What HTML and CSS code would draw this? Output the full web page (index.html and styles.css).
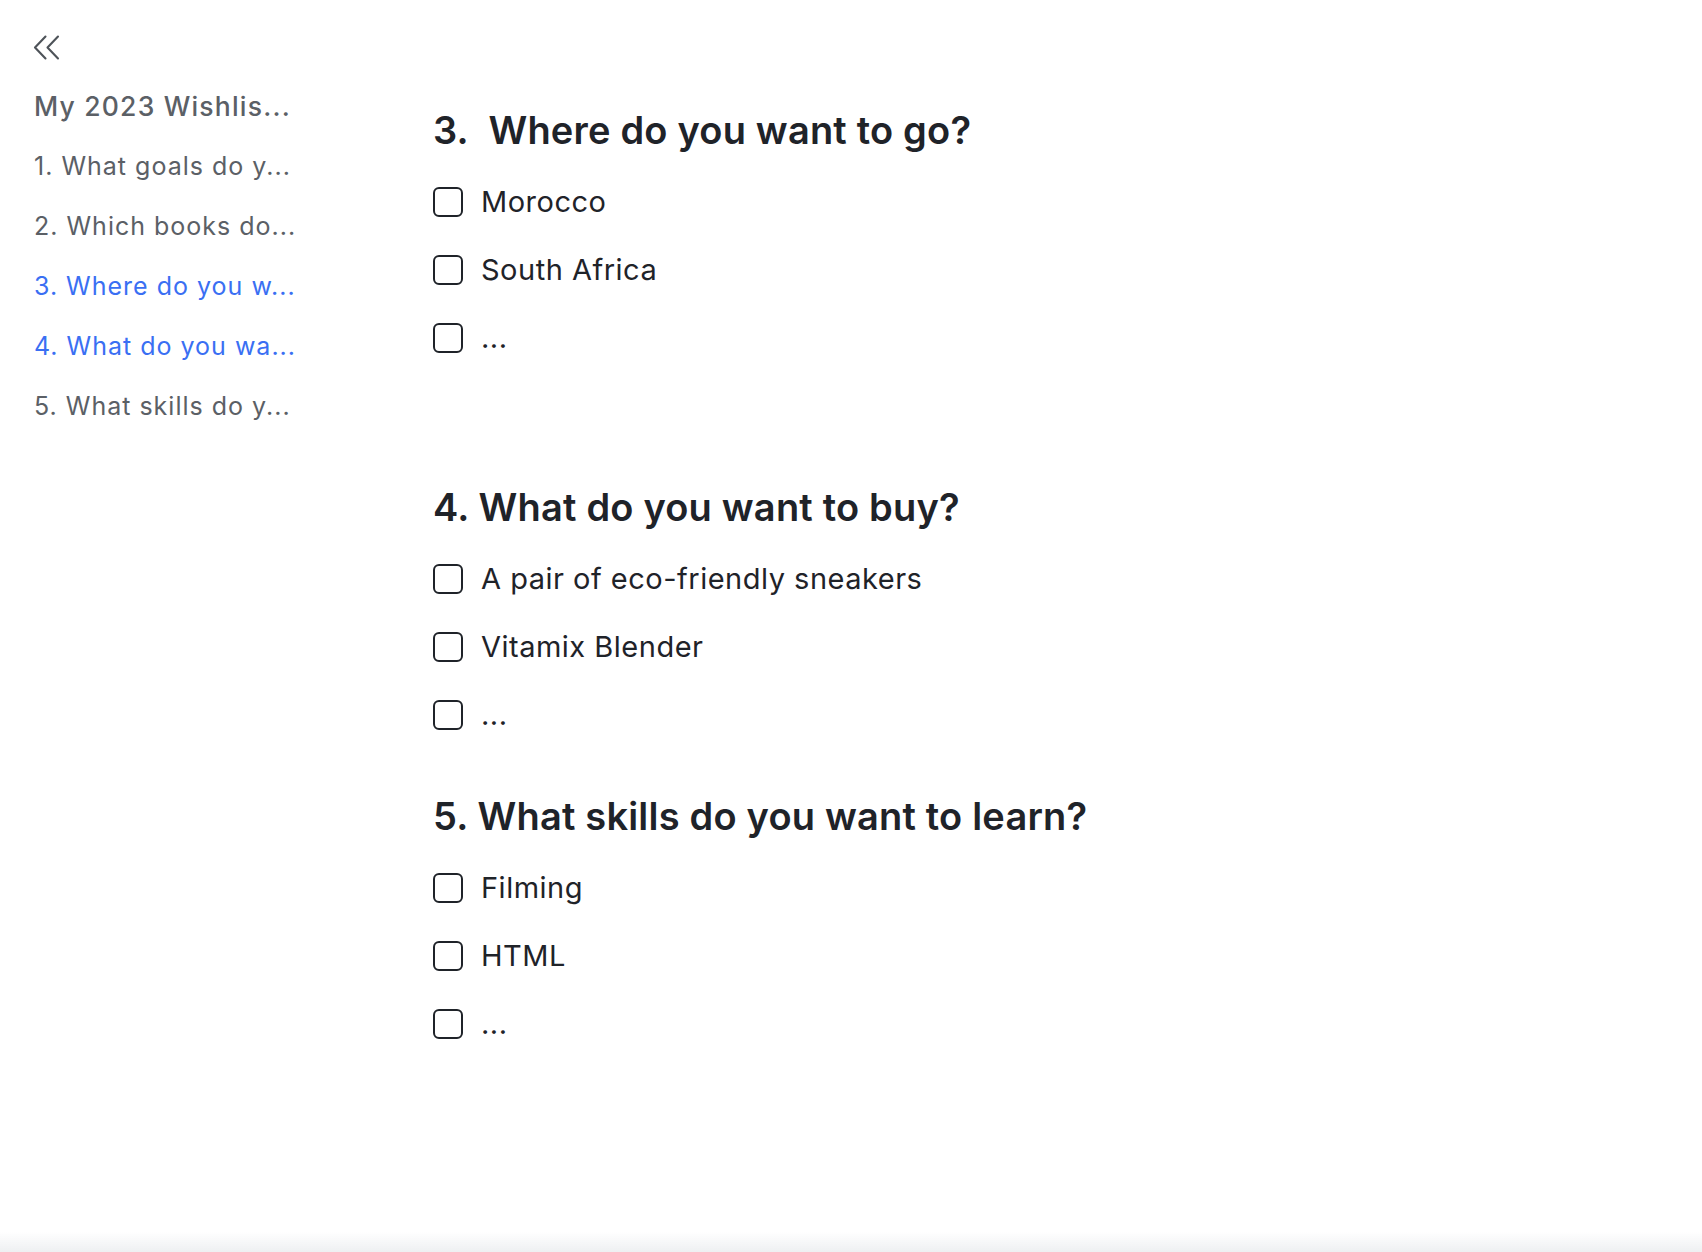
FILE: index.html
```html
<!DOCTYPE html>
<html lang="en">
<head>
<meta charset="utf-8">
<title>My 2023 Wishlist</title>
<link rel="stylesheet" href="styles.css">
</head>
<body>
<div class="page">
  <aside class="sidebar">
    <button class="collapse" aria-label="Collapse">
      <svg width="27" height="25" viewBox="0 0 27 25" fill="none" stroke="#4e5359" stroke-width="2.1" stroke-linecap="round" stroke-linejoin="round">
        <path d="M12.5 1.5 L2 12.5 L12.5 23.5"/>
        <path d="M25 1.5 L14.5 12.5 L25 23.5"/>
      </svg>
    </button>
    <nav class="toc">
      <div class="toc-title">My 2023 Wishlis...</div>
      <div class="toc-item">1. What goals do y...</div>
      <div class="toc-item">2. Which books do...</div>
      <div class="toc-item active">3. Where do you w...</div>
      <div class="toc-item active">4. What do you wa...</div>
      <div class="toc-item">5. What skills do y...</div>
    </nav>
  </aside>
  <main class="doc">
    <section class="block">
      <h2 class="heading">3.&nbsp; Where do you want to go?</h2>
      <ul class="todo">
        <li><span class="box"></span><span>Morocco</span></li>
        <li><span class="box"></span><span>South Africa</span></li>
        <li><span class="box"></span><span>...</span></li>
      </ul>
      <div class="empty-line"></div>
    </section>
    <section class="block">
      <h2 class="heading">4. What do you want to buy?</h2>
      <ul class="todo">
        <li><span class="box"></span><span>A pair of eco-friendly sneakers</span></li>
        <li><span class="box"></span><span>Vitamix Blender</span></li>
        <li><span class="box"></span><span>...</span></li>
      </ul>
    </section>
    <section class="block">
      <h2 class="heading">5. What skills do you want to learn?</h2>
      <ul class="todo">
        <li><span class="box"></span><span>Filming</span></li>
        <li><span class="box"></span><span>HTML</span></li>
        <li><span class="box"></span><span>...</span></li>
      </ul>
    </section>
  </main>
</div>
<div class="bottom-fade"></div>
</body>
</html>
```
FILE: styles.css
```css
* { box-sizing: border-box; }
html, body {
  margin: 0;
  padding: 0;
  background: #ffffff;
}
body {
  font-family: Inter, "Noto Sans", "Liberation Sans", sans-serif;
  color: #1f2329;
  height: 1252px;
  overflow: hidden;
}
.page {
  display: flex;
  align-items: flex-start;
}
.sidebar {
  width: 433px;
  flex: none;
  padding: 35px 0 0 34px;
}
.collapse {
  display: block;
  border: 0;
  background: none;
  padding: 0;
  margin: 0 0 0 -1px;
  width: 27px;
  height: 25px;
  cursor: pointer;
}
.collapse svg { display: block; }
.toc {
  margin-top: 16px;
  display: flex;
  flex-direction: column;
}
.toc-title {
  font-size: 26.5px;
  font-weight: 500;
  line-height: 60px;
  color: #5b6066;
  letter-spacing: 1.2px;
}
.toc-item {
  font-size: 25px;
  font-weight: 400;
  line-height: 60px;
  color: #5b6066;
  letter-spacing: 1px;
}
.toc-item.active { color: #3a6ff3; }
.doc {
  flex: 1;
  padding-top: 106px;
}
.block + .block { margin-top: 43px; }
.heading {
  margin: 0;
  font-size: 38px;
  font-weight: 600;
  line-height: 48px;
  letter-spacing: 0.2px;
  color: #1f2329;
}
.todo {
  list-style: none;
  margin: 14px 0 0 0;
  padding: 0;
}
.todo li {
  display: flex;
  align-items: center;
  gap: 18px;
  height: 68px;
  font-size: 29px;
  line-height: 40px;
  color: #1f2329;
  letter-spacing: 0.5px;
}
.box {
  flex: none;
  width: 30px;
  height: 30px;
  border: 2.5px solid #1f2329;
  border-radius: 6px;
}
.empty-line { height: 68px; }
.bottom-fade {
  position: fixed;
  left: 0;
  right: 0;
  bottom: 0;
  height: 20px;
  background: linear-gradient(to bottom, rgba(240,241,242,0), rgba(236,238,240,0.9));
  pointer-events: none;
}
```
